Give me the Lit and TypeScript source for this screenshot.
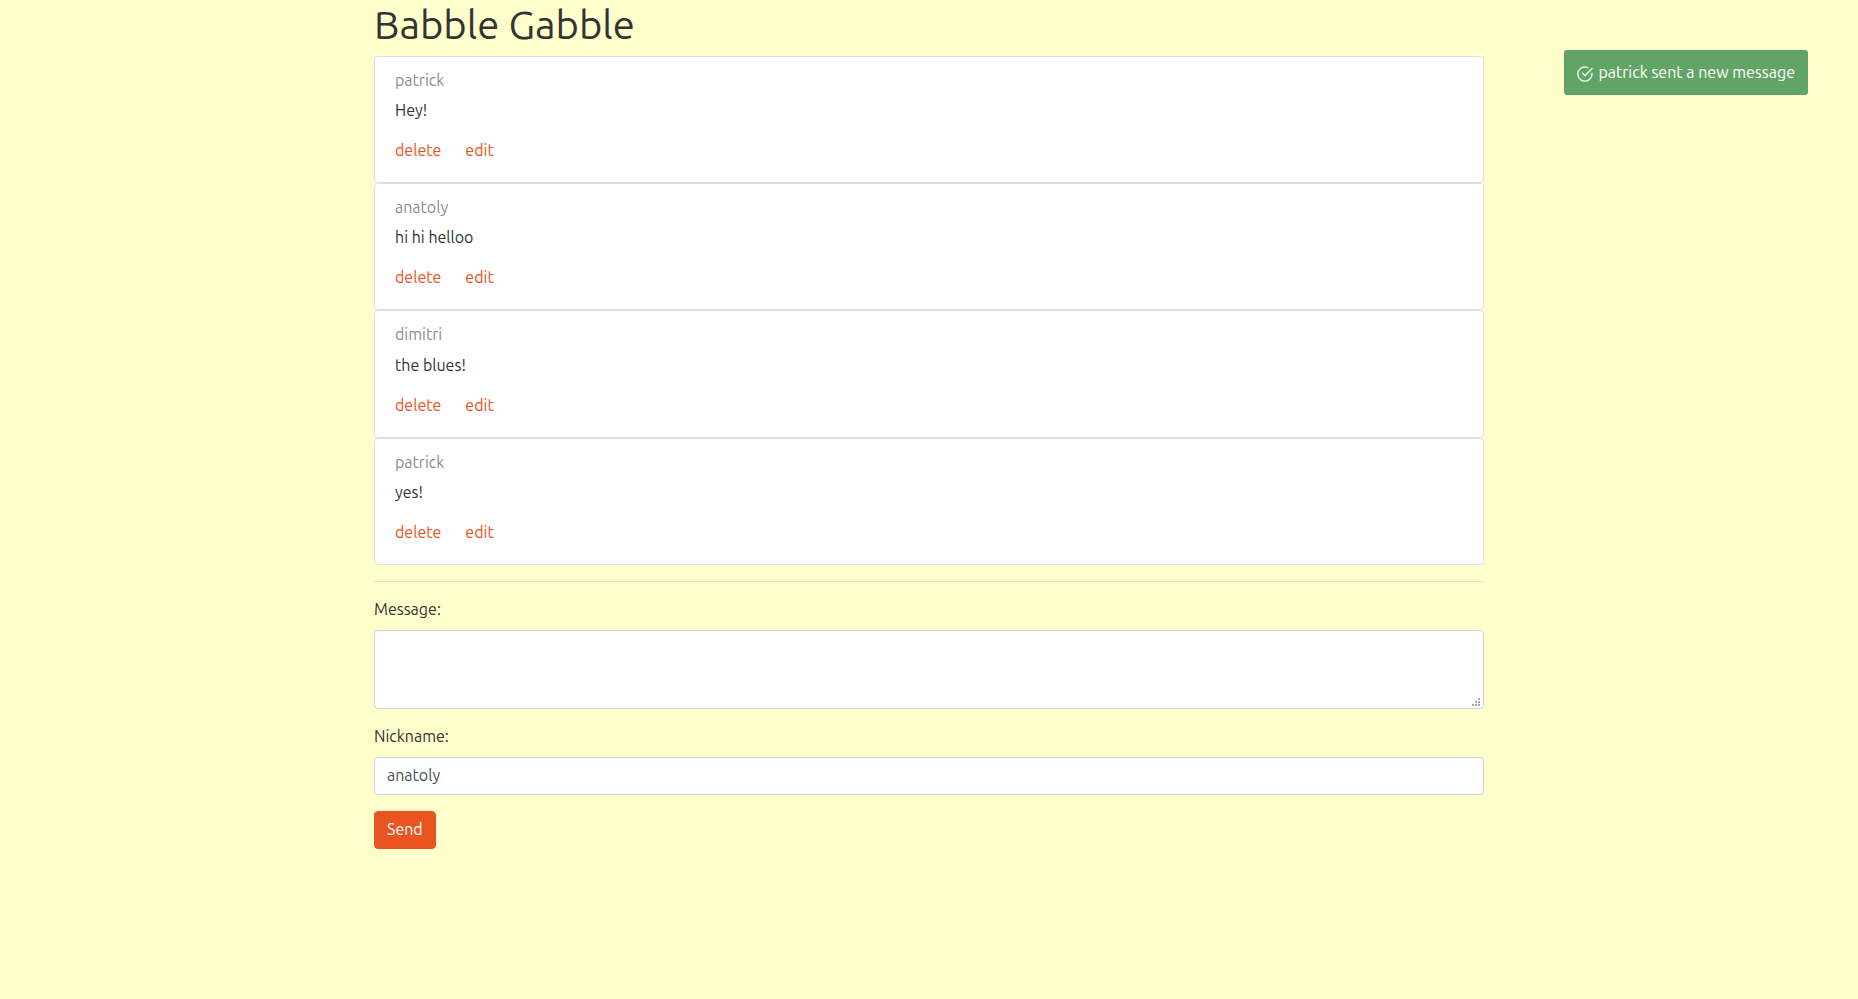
import { LitElement, html, css, svg } from "lit";
import { customElement, property, state } from "lit/decorators.js";

interface Message {
  id: number;
  author: string;
  text: string;
}

const checkCircle = svg`
  <path d="M14.2 7.4V8a6.3 6.3 0 1 1-3.7-5.7" />
  <path d="M14.2 3.2 8 9.5 5.9 7.4" />
`;

@customElement("message-card")
export class MessageCard extends LitElement {
  @property({ attribute: false }) message!: Message;

  static styles = css`
    :host {
      display: block;
      box-sizing: border-box;
      padding: 20px;
      background: #fff;
      border: 1px solid #dfdfdf;
      border-radius: 4px;
    }
    .author {
      margin: -6px 0 8px;
      font-size: 16px;
      font-weight: 400;
      line-height: 1.2;
      color: #868e96;
    }
    .text {
      margin: 0 0 16px;
    }
    .actions {
      display: flex;
      gap: 24px;
    }
    .link {
      color: #e95420;
      text-decoration: none;
    }
    .link:hover {
      text-decoration: underline;
    }
  `;

  private fire(name: string, e: Event) {
    e.preventDefault();
    this.dispatchEvent(new CustomEvent(name, { detail: this.message.id }));
  }

  render() {
    return html`
      <h6 class="author">${this.message.author}</h6>
      <p class="text">${this.message.text}</p>
      <div class="actions">
        <a class="link" href="#" @click=${(e: Event) => this.fire("remove", e)}>delete</a>
        <a class="link" href="#" @click=${(e: Event) => this.fire("edit", e)}>edit</a>
      </div>
    `;
  }
}

@customElement("app-root")
export class AppRoot extends LitElement {
  @state() private messages: Message[] = [
    { id: 1, author: "patrick", text: "Hey!" },
    { id: 2, author: "anatoly", text: "hi hi helloo" },
    { id: 3, author: "dimitri", text: "the blues!" },
    { id: 4, author: "patrick", text: "yes!" },
  ];
  @state() private notice = "patrick sent a new message";

  static styles = css`
    :host {
      display: block;
      box-sizing: border-box;
      min-height: 100vh;
      background: #ffffcc;
      color: #333;
      font-family: Ubuntu, "Noto Sans", "Open Sans", sans-serif;
      font-size: 16px;
      line-height: 24px;
    }
    .container {
      box-sizing: border-box;
      max-width: 1140px;
      margin: 0 auto;
      padding: 0 15px;
    }
    .title {
      margin: 0 0 6px;
      font-size: 40px;
      font-weight: 400;
      line-height: 50px;
    }
    .rule {
      margin: 16px 0;
      border: 0;
      border-top: 1px solid rgba(0, 0, 0, 0.1);
    }
    .group {
      display: flex;
      flex-direction: column;
      align-items: stretch;
      gap: 10px;
      margin-bottom: 16px;
    }
    .label {
      align-self: flex-start;
      line-height: 22px;
    }
    .control {
      display: block;
      box-sizing: border-box;
      width: 100%;
      height: 38px;
      margin: 0;
      padding: 5px 12px 7px;
      font: inherit;
      color: #495057;
      background: #fff;
      border: 1px solid #ced4da;
      border-radius: 4px;
      outline: 0;
    }
    .control:focus {
      border-color: #f4ab92;
    }
    .area {
      height: 79px;
      resize: vertical;
    }
    .area::-webkit-resizer {
      background: url("data:image/svg+xml,%3Csvg xmlns='http://www.w3.org/2000/svg' width='15' height='15'%3E%3Cpath fill='%23aaa' d='M10 5h2v2h-2zM7 8h2v2H7zM10 8h2v2h-2zM4 11h2v2H4zM7 11h2v2H7zM10 11h2v2h-2z'/%3E%3C/svg%3E")
        no-repeat right bottom;
    }
    .send {
      height: 38px;
      margin: 0;
      padding: 5px 12px 7px;
      font: inherit;
      color: #fff;
      background: #e95420;
      border: 1px solid #e95420;
      border-radius: 4px;
      cursor: pointer;
    }
    .toast {
      position: fixed;
      top: 50px;
      right: 50px;
      display: flex;
      align-items: center;
      gap: 4px;
      padding: 10px 13px 11px 12px;
      color: #fff;
      background: #62a465;
      border-radius: 3px;
    }
    .toast-icon {
      width: 18px;
      height: 18px;
      margin-top: 4px;
      fill: none;
      stroke: #e8f3e8;
      stroke-width: 1.3;
      stroke-linecap: round;
      stroke-linejoin: round;
    }
  `;

  private remove(e: CustomEvent<number>) {
    this.messages = this.messages.filter((m) => m.id !== e.detail);
  }

  private submit(e: Event) {
    e.preventDefault();
    const form = e.target as HTMLFormElement;
    const data = new FormData(form);
    const text = String(data.get("message")).trim();
    const author = String(data.get("nickname")).trim();
    if (!text || !author) return;
    this.messages = [...this.messages, { id: Date.now(), author, text }];
    this.notice = `${author} sent a new message`;
    form.querySelector("textarea")!.value = "";
  }

  render() {
    return html`
      <main class="container">
        <h1 class="title">Babble Gabble</h1>
        <section>
          ${this.messages.map(
            (m) => html`<message-card .message=${m} @remove=${this.remove}></message-card>`
          )}
        </section>
        <hr class="rule" />
        <form @submit=${this.submit}>
          <div class="group">
            <label class="label" for="message">Message:</label>
            <textarea class="control area" id="message" name="message"></textarea>
          </div>
          <div class="group">
            <label class="label" for="nickname">Nickname:</label>
            <input class="control" id="nickname" name="nickname" type="text" value="anatoly" />
          </div>
          <button class="send" type="submit">Send</button>
        </form>
      </main>
      <div class="toast" role="status">
        <svg class="toast-icon" viewBox="0 0 16 16" aria-hidden="true">${checkCircle}</svg>
        <span>${this.notice}</span>
      </div>
    `;
  }
}
